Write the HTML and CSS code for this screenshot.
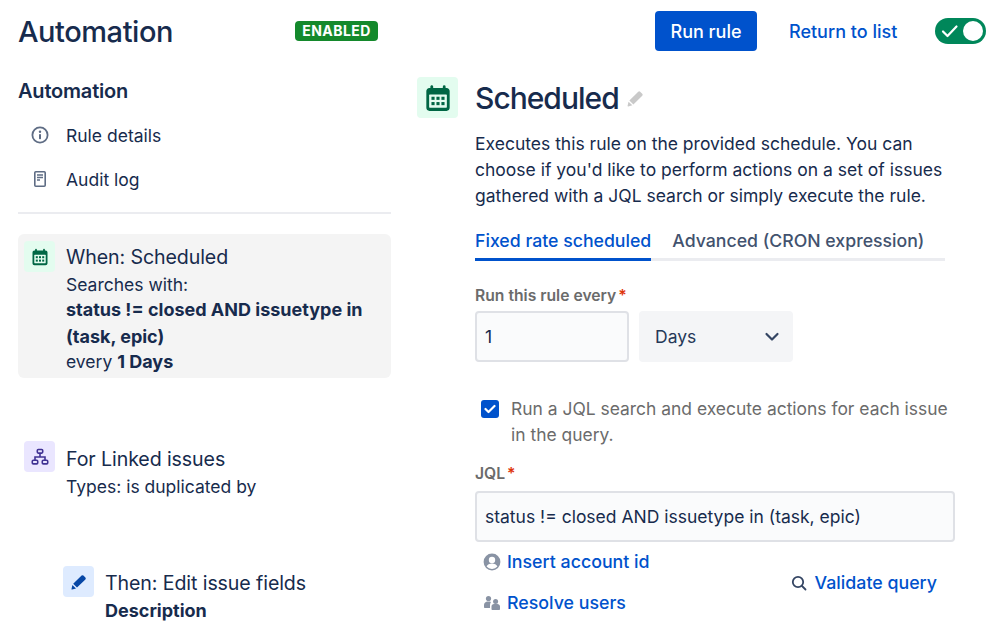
FILE: index.html
```html
<!DOCTYPE html>
<html lang="en">
<head>
    <meta charset="UTF-8">
    <title>Automation</title>
    <link rel="stylesheet" href="styles.css">
</head>
<body>
    <div class="page">
        <!--header-->
        <header class="top">
            <div class="top-left">
                <h1>Automation</h1>
                <span class="badge">ENABLED</span>
            </div>
            <button class="run-btn">Run rule</button>
            <a class="return-link">Return to list</a>
            <span class="toggle">
                <svg width="18" height="14" viewBox="0 0 18 14"><path d="M2 7.5l4.5 4.5L15.5 2.5" fill="none" stroke="#fff" stroke-width="2.2" stroke-linecap="round" stroke-linejoin="round"/></svg>
                <i class="knob"></i>
            </span>
        </header>

        <div class="columns">
            <!--left side-->
            <aside class="side">
                <h3>Automation</h3>
                <ul class="side-nav">
                    <li>
                        <svg class="nav-icon" width="20" height="20" viewBox="0 0 20 20"><circle cx="10" cy="10" r="7.6" fill="none" stroke="#5e6c84" stroke-width="1.8"/><circle cx="10" cy="6.7" r="1.2" fill="#5e6c84"/><rect x="9" y="9" width="2" height="5.2" rx="0.8" fill="#5e6c84"/></svg>
                        Rule details
                    </li>
                    <li>
                        <svg class="nav-icon" width="20" height="20" viewBox="0 0 20 20"><rect x="4.8" y="2.8" width="10.4" height="14.4" rx="1" fill="none" stroke="#5e6c84" stroke-width="1.6"/><path d="M7 6h6M7 8.5h6M7 11h3" stroke="#5e6c84" stroke-width="1.3"/></svg>
                        Audit log
                    </li>
                </ul>

                <div class="step step-active">
                    <span class="step-icon green">
                        <svg width="18" height="18" viewBox="0 0 18 18"><use href="#cal"/></svg>
                    </span>
                    <div class="step-body">
                        <div class="step-title">When: Scheduled</div>
                        <div class="step-text">Searches with:</div>
                        <div class="step-text query"><b>status != closed AND issuetype in (task, epic)</b></div>
                        <div class="step-text every">every <b>1 Days</b></div>
                    </div>
                </div>

                <div class="step step-linked">
                    <span class="step-icon purple">
                        <svg width="18" height="18" viewBox="0 0 18 18" fill="none" stroke="#403294" stroke-width="1.6"><rect x="6.3" y="1.5" width="5.4" height="3.6" rx="1"/><rect x="1.3" y="12.3" width="5.4" height="3.6" rx="1"/><rect x="11.3" y="12.3" width="5.4" height="3.6" rx="1"/><path d="M9 5v4M4 12.3V9h10v3.3"/></svg>
                    </span>
                    <div class="step-body">
                        <div class="step-title">For Linked issues</div>
                        <div class="step-text">Types: is duplicated by</div>
                    </div>
                </div>

                <div class="step step-then">
                    <span class="step-icon blue">
                        <svg width="18" height="18" viewBox="0 0 18 18"><path d="M11.6 2.6a1.3 1.3 0 0 1 1.8 0l2 2a1.3 1.3 0 0 1 0 1.8L7 14.6l-3.8-3.8zM2.4 12l3.6 3.5-3.9 1c-.4.1-.7-.2-.6-.6z" fill="#0747a6"/></svg>
                    </span>
                    <div class="step-body">
                        <div class="step-title">Then: Edit issue fields</div>
                        <div class="step-text"><b>Description</b></div>
                    </div>
                </div>
            </aside>

            <!--right side-->
            <main class="detail">
                <div class="detail-head">
                    <span class="detail-icon">
                        <svg width="28" height="28" viewBox="0 0 18 18"><use href="#cal"/></svg>
                    </span>
                    <h2>Scheduled</h2>
                    <svg class="edit-icon" width="19" height="19" viewBox="0 0 18 18"><path d="M11.6 2.6a1.3 1.3 0 0 1 1.8 0l2 2a1.3 1.3 0 0 1 0 1.8L7 14.6l-3.8-3.8zM2.4 12l3.6 3.5-3.9 1c-.4.1-.7-.2-.6-.6z" fill="#c9c9c9"/></svg>
                </div>
                <div class="detail-body">
                    <p class="desc">Executes this rule on the provided schedule. You can choose if you'd like to perform actions on a set of issues gathered with a JQL search or simply execute the rule.</p>
                    <div class="tabs">
                        <span class="tab tab-on">Fixed rate scheduled</span>
                        <span class="tab">Advanced (CRON expression)</span>
                    </div>
                    <label class="field-label">Run this rule every<em>*</em></label>
                    <div class="rate-row">
                        <div class="input rate-input">1</div>
                        <div class="select">Days
                            <svg width="18" height="18" viewBox="0 0 18 18"><path d="M3.5 6l5.5 5.5L14.500 6" fill="none" stroke="#344563" stroke-width="2.2" stroke-linecap="round" stroke-linejoin="round"/></svg>
                        </div>
                    </div>
                    <div class="check-row">
                        <span class="checkbox">
                            <svg width="12" height="10" viewBox="0 0 12 10"><path d="M1.5 5l3 3 6-6" fill="none" stroke="#fff" stroke-width="2.2" stroke-linecap="round" stroke-linejoin="round"/></svg>
                        </span>
                        <span class="check-text">Run a JQL search and execute actions for each issue in the query.</span>
                    </div>
                    <label class="field-label jql-label">JQL<em>*</em></label>
                    <div class="input">status != closed AND issuetype in (task, epic)</div>
                    <div class="jql-actions">
                        <div class="jql-links">
                            <a class="action">
                                <svg width="18" height="18" viewBox="0 0 18 18"><circle cx="9" cy="9" r="8.4" fill="#8993a4"/><circle cx="9" cy="7" r="3.2" fill="#fff"/><path d="M3.6 13.6c.8-2 2.8-3 5.4-3s4.6 1 5.400 3A7 7 0 0 1 9 16a7 7 0 0 1-5.400-2.400z" fill="#fff"/></svg>
                                Insert account id
                            </a>
                            <a class="action">
                                <svg width="18" height="18" viewBox="0 0 18 18" fill="#8993a4"><circle cx="5.5" cy="4.5" r="2.6"/><circle cx="12.6" cy="7.6" r="2.5"/><path d="M1 12c0-2.6 1-4.4 4.5-4.4 1 0 1.8.1 2.4.5-.7 1-.9 2.200-.9 3.400v2.500H2c-.6 0-1-.4-1-1zM8.500 12.500c0-1.500 1-2.500 2.500-2.500h3.300c1.500 0 2.700 1 2.700 2.500v2.500c0 .6-.4 1-1 1h-6.500c-.6 0-1-.4-1-1z"/></svg>
                                Resolve users
                            </a>
                        </div>
                        <a class="action validate">
                            <svg width="18" height="18" viewBox="0 0 18 18" fill="none" stroke="#344563" stroke-width="1.8" stroke-linecap="round"><circle cx="8" cy="8" r="5.2"/><path d="M12 12l3.500 3.500"/></svg>
                            Validate query
                        </a>
                    </div>
                </div>
            </main>
        </div>
    </div>

    <svg class="defs" width="0" height="0">
        <symbol id="cal" viewBox="0 0 18 18">
            <path d="M5 .8c.5 0 .9.4.9.9V2.500h6.200V1.700a.9.9 0 0 1 1.800 0v.8h.6c1.200 0 2 .9 2 2v10.800c0 1.100-.8 2-2 2H3.500c-1.200 0-2-.9-2-2V4.500c0-1.100.8-2 2-2h.6V1.700c0-.5.400-.9.900-.9z" fill="#006644"/>
            <g fill="#e3fcef"><rect x="3.300" y="6.800" width="11.400" height="8.400" rx=".4"/></g>
            <g fill="#006644"><rect x="4.800" y="8.200" width="2" height="2"/><rect x="8" y="8.200" width="2" height="2"/><rect x="11.200" y="8.200" width="2" height="2"/><rect x="4.800" y="11.600" width="2" height="2"/><rect x="8" y="11.600" width="2" height="2"/><rect x="11.200" y="11.600" width="2" height="2"/></g>
        </symbol>
    </svg>
</body>
</html>
```

FILE: styles.css
```css
*{
    padding: 0;
    margin: 0;
    box-sizing: border-box;
}
html,body{
    width: 100%;
    height: 100%;
}
body{
    font-family: Inter,"Liberation Sans",sans-serif;
    font-size: 18px;
    color: #172b4d;
    background-color: #fff;
    overflow: hidden;
}
.page{
    height: 625px;
    overflow: hidden;
    padding-top: 11px;
}
.defs{
    position: absolute;
}

/*
    header
*/
.top{
    display: flex;
    align-items: center;
    height: 40px;
    padding: 0 13px 0 18px;
}
.top-left{
    display: flex;
    align-items: center;
    justify-content: space-between;
    width: 360px;
    margin-right: 277px;
}
h1{
    font-size: 29px;
    font-weight: 500;
    letter-spacing: -0.45px;
}
.badge{
    display: block;
    width: 83px;
    height: 20px;
    line-height: 20px;
    text-align: center;
    background-color: #14892c;
    color: #fff;
    border-radius: 4px;
    font-size: 14px;
    font-weight: 700;
    letter-spacing: 0.45px;
}
.run-btn{
    width: 102px;
    height: 40px;
    border: 0;
    border-radius: 4px;
    background-color: #0052cc;
    color: #fff;
    font: inherit;
    font-weight: 500;
}
.return-link{
    margin-left: 32px;
    color: #0052cc;
    font-weight: 500;
}
.toggle{
    display: flex;
    align-items: center;
    justify-content: space-between;
    width: 51px;
    height: 26px;
    margin-left: auto;
    padding: 0 3px 0 6px;
    border-radius: 13px;
    background-color: #00875a;
}
.knob{
    width: 20px;
    height: 20px;
    border-radius: 50%;
    background-color: #fff;
}

/*
    columns
*/
.columns{
    display: flex;
    padding-left: 18px;
}
.side{
    width: 373px;
    margin-right: 26px;
    padding-top: 28px;
}
h3{
    font-size: 20px;
    font-weight: 600;
    line-height: 24px;
    letter-spacing: -0.2px;
}
.side-nav{
    list-style: none;
    margin-top: 10px;
    padding-bottom: 11px;
    border-bottom: 2px solid #ebecf0;
}
.side-nav li{
    display: flex;
    align-items: center;
    height: 44px;
    padding-left: 12px;
    font-size: 17.5px;
}
.nav-icon{
    margin-right: 16px;
}
.step{
    display: flex;
    column-gap: 11px;
    padding: 7px 6px 6px;
    font-size: 17.5px;
}
.step-active{
    height: 144px;
    margin-top: 20px;
    background-color: #f4f4f4;
    border-radius: 6px;
}
.step-active .step-body{
    padding-top: 1px;
}
.step-linked{
    margin-top: 56px;
}
.step-linked .step-body{
    padding-top: 3px;
}
.step-then{
    margin-top: 53px;
    margin-left: 39px;
}
.step-then .step-body{
    padding-top: 2px;
}
.step-icon{
    flex: none;
    display: flex;
    align-items: center;
    justify-content: center;
    width: 31px;
    height: 31px;
    border-radius: 4px;
}
.green{
    background-color: #e3fcef;
}
.purple{
    background-color: #eae6ff;
}
.blue{
    background-color: #deebff;
}
.step-title{
    font-size: 19.6px;
    line-height: 30px;
    letter-spacing: -0.1px;
}
.step-text{
    line-height: 26px;
}
.step-text b{
    font-size: 18px;
}
.query{
    line-height: 27px;
    margin-top: -2px;
}
.every{
    margin-top: -1px;
}
b{
    font-weight: 700;
}

/*
    detail panel
*/
.detail{
    width: 540px;
    padding-top: 26px;
}
.detail-head{
    display: flex;
    align-items: center;
    height: 41px;
}
.detail-icon{
    display: flex;
    align-items: center;
    justify-content: center;
    width: 41px;
    height: 41px;
    margin-right: 17px;
    background-color: #e3fcef;
    border-radius: 4px;
}
h2{
    font-size: 30px;
    font-weight: 500;
    letter-spacing: -1px;
}
.edit-icon{
    margin: 2px 0 0 7px;
}
.detail-body{
    margin-left: 58px;
    width: 480px;
}
.desc{
    width: 470px;
    margin-top: 13px;
    line-height: 26px;
    font-size: 17.5px;
}
.tabs{
    display: flex;
    column-gap: 21px;
    width: 470px;
    margin-top: 17px;
    border-bottom: 3px solid #ebecf0;
}
.tab{
    height: 35px;
    margin-bottom: -3px;
    line-height: 30px;
    font-weight: 500;
    color: #42526e;
    font-size: 17.7px;
}
.tab-on{
    color: #0052cc;
    border-bottom: 3px solid #0052cc;
}
.field-label{
    display: block;
    margin-top: 25px;
    font-size: 15.7px;
    font-weight: 600;
    line-height: 20px;
    color: #6b6b6b;
}
.field-label em{
    color: #de350b;
    font-style: normal;
    margin-left: 2px;
}
.rate-row{
    display: flex;
    column-gap: 10px;
    margin-top: 5px;
}
.input{
    height: 51px;
    padding-left: 8px;
    line-height: 47px;
    background-color: #fafbfc;
    border: 2px solid #dfe1e6;
    border-radius: 4px;
    font-size: 17.5px;
}
.rate-input{
    width: 154px;
}
.select{
    display: flex;
    align-items: center;
    justify-content: space-between;
    width: 154px;
    height: 51px;
    padding: 0 12px 0 16px;
    background-color: #f4f5f7;
    border-radius: 4px;
    font-size: 17.5px;
    color: #253858;
}
.check-row{
    display: flex;
    column-gap: 12px;
    width: 480px;
    margin-top: 34px;
    padding-left: 6px;
    line-height: 26px;
    color: #6b6b6b;
    font-size: 17.45px;
}
.checkbox{
    flex: none;
    display: flex;
    align-items: center;
    justify-content: center;
    width: 18px;
    height: 18px;
    margin-top: 4px;
    background-color: #0052cc;
    border-radius: 3px;
}
.jql-label{
    margin-top: 16px;
    margin-bottom: 7px;
}
.jql-actions{
    display: flex;
    align-items: center;
    justify-content: space-between;
    padding: 8px 18px 0 8px;
}
.jql-links{
    display: flex;
    flex-direction: column;
    row-gap: 17px;
}
.action{
    display: flex;
    align-items: center;
    column-gap: 6px;
    color: #0052cc;
    font-weight: 500;
    font-size: 17.8px;
    line-height: 24px;
}
.validate{
    column-gap: 7px;
}
```
